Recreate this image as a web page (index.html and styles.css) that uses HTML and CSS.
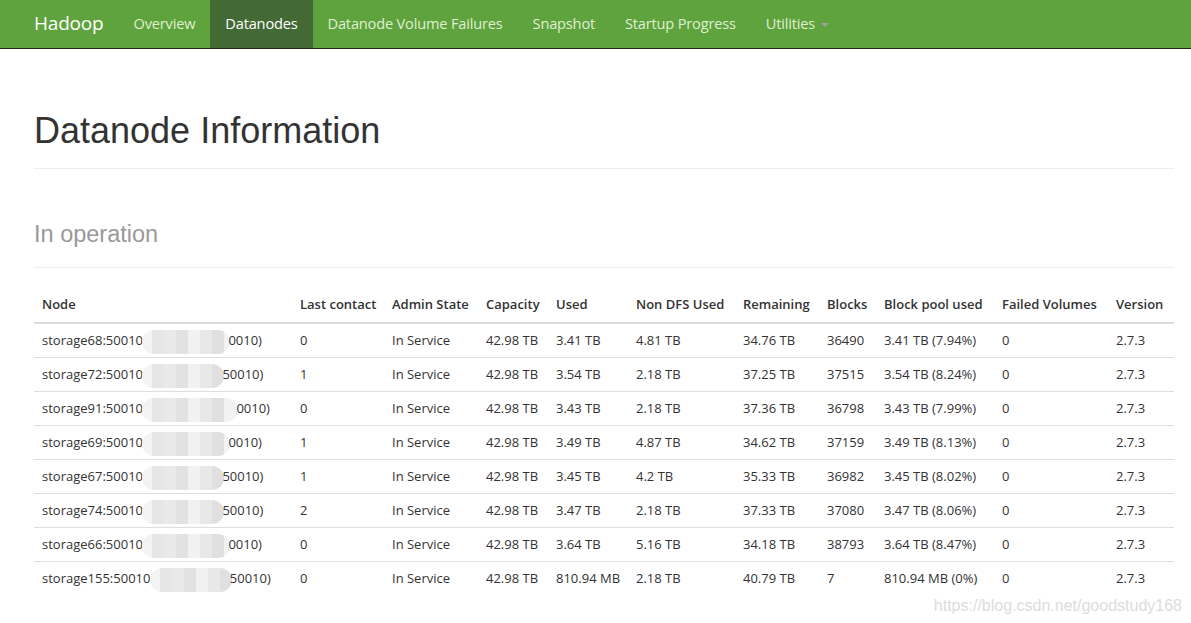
FILE: index.html
```html
<!DOCTYPE html>
<html>
<head>
<meta charset="utf-8">
<title>Datanode Information</title>
<link rel="stylesheet" href="styles.css">
</head>
<body>
<nav class="navbar">
  <div class="nav-inner">
    <span class="brand">Hadoop</span>
    <ul class="nav">
      <li><a>Overview</a></li>
      <li class="active"><a>Datanodes</a></li>
      <li><a>Datanode Volume Failures</a></li>
      <li><a>Snapshot</a></li>
      <li><a>Startup Progress</a></li>
      <li><a>Utilities <span class="caret"></span></a></li>
    </ul>
  </div>
</nav>
<main class="container">
  <div class="page-header"><h1>Datanode Information</h1></div>
  <div class="page-header sub"><h2>In operation</h2></div>
  <table class="table">
    <thead>
      <tr>
        <th class="c-node">Node</th>
        <th class="c-last">Last contact</th>
        <th class="c-admin">Admin State</th>
        <th class="c-cap">Capacity</th>
        <th class="c-used">Used</th>
        <th class="c-nondfs">Non DFS Used</th>
        <th class="c-rem">Remaining</th>
        <th class="c-blocks">Blocks</th>
        <th class="c-bpu">Block pool used</th>
        <th class="c-failed">Failed Volumes</th>
        <th class="c-ver">Version</th>
      </tr>
    </thead>
    <tbody>
      <tr><td>storage68:50010 <span class="blur b1"></span>0010)</td><td>0</td><td>In Service</td><td>42.98 TB</td><td>3.41 TB</td><td>4.81 TB</td><td>34.76 TB</td><td>36490</td><td>3.41 TB (7.94%)</td><td>0</td><td>2.7.3</td></tr>
      <tr><td>storage72:50010 <span class="blur b2"></span>50010)</td><td>1</td><td>In Service</td><td>42.98 TB</td><td>3.54 TB</td><td>2.18 TB</td><td>37.25 TB</td><td>37515</td><td>3.54 TB (8.24%)</td><td>0</td><td>2.7.3</td></tr>
      <tr><td>storage91:50010 <span class="blur b3"></span>0010)</td><td>0</td><td>In Service</td><td>42.98 TB</td><td>3.43 TB</td><td>2.18 TB</td><td>37.36 TB</td><td>36798</td><td>3.43 TB (7.99%)</td><td>0</td><td>2.7.3</td></tr>
      <tr><td>storage69:50010 <span class="blur b1"></span>0010)</td><td>1</td><td>In Service</td><td>42.98 TB</td><td>3.49 TB</td><td>4.87 TB</td><td>34.62 TB</td><td>37159</td><td>3.49 TB (8.13%)</td><td>0</td><td>2.7.3</td></tr>
      <tr><td>storage67:50010 <span class="blur b2"></span>50010)</td><td>1</td><td>In Service</td><td>42.98 TB</td><td>3.45 TB</td><td>4.2 TB</td><td>35.33 TB</td><td>36982</td><td>3.45 TB (8.02%)</td><td>0</td><td>2.7.3</td></tr>
      <tr><td>storage74:50010 <span class="blur b2"></span>50010)</td><td>2</td><td>In Service</td><td>42.98 TB</td><td>3.47 TB</td><td>2.18 TB</td><td>37.33 TB</td><td>37080</td><td>3.47 TB (8.06%)</td><td>0</td><td>2.7.3</td></tr>
      <tr><td>storage66:50010 <span class="blur b1"></span>0010)</td><td>0</td><td>In Service</td><td>42.98 TB</td><td>3.64 TB</td><td>5.16 TB</td><td>34.18 TB</td><td>38793</td><td>3.64 TB (8.47%)</td><td>0</td><td>2.7.3</td></tr>
      <tr><td>storage155:50010 <span class="blur b2"></span>50010)</td><td>0</td><td>In Service</td><td>42.98 TB</td><td>810.94 MB</td><td>2.18 TB</td><td>40.79 TB</td><td>7</td><td>810.94 MB (0%)</td><td>0</td><td>2.7.3</td></tr>
    </tbody>
  </table>
</main>
<div class="watermark">https://blog.csdn.net/goodstudy168</div>
</body>
</html>
```
FILE: styles.css
```css
html, body { margin: 0; padding: 0; background: #fff; }
body {
  font-family: "Open Sans", "Noto Sans", sans-serif;
  font-size: 13px;
  color: #333;
  position: relative;
  min-height: 623px;
  overflow: hidden;
}
.navbar {
  background: #5fa33e;
  border-bottom: 1px solid #1e2b18;
  height: 48px;
}
.nav-inner {
  display: flex;
  align-items: stretch;
  height: 48px;
  padding-left: 34px;
}
.brand {
  font-size: 19px;
  color: #fff;
  line-height: 46px;
  padding-bottom: 2px;
  margin-right: 15px;
  font-family: "Open Sans", sans-serif;
  letter-spacing: -0.2px;
}
.nav {
  display: flex;
  list-style: none;
  margin: 0;
  padding: 0;
}
.nav li a {
  display: block;
  padding: 0 15px 2px;
  line-height: 46px;
  font-size: 14.6px;
  color: #dff0d0;
  letter-spacing: -0.18px;
}
.nav li.active a {
  background: #436a34;
  color: #fff;
}
.caret {
  display: inline-block;
  width: 0;
  height: 0;
  border-top: 4px solid #a0a0a0;
  border-left: 4px solid transparent;
  border-right: 4px solid transparent;
  vertical-align: middle;
  margin-left: 2px;
}
.container {
  padding: 0 17px 0 34px;
}
.page-header {
  border-bottom: 1px solid #eee;
  margin-top: 62px;
  padding-bottom: 17px;
}
.page-header h1 {
  margin: 0;
  font-family: "Liberation Sans", Arial, sans-serif;
  font-weight: 400;
  font-size: 36px;
  line-height: 40px;
  color: #333;
}
.page-header.sub {
  margin-top: 52px;
  padding-bottom: 20px;
}
.page-header h2 {
  margin: 0;
  font-family: "Liberation Sans", Arial, sans-serif;
  font-weight: 400;
  font-size: 23.5px;
  line-height: 26px;
  color: #999;
}
.table {
  width: 1140px;
  border-collapse: collapse;
  margin-top: 18px;
  table-layout: fixed;
}
.table th {
  text-align: left;
  font-weight: 600;
  padding: 8px 8px;
  line-height: 20px;
  border-bottom: 2px solid #ddd;
  white-space: nowrap;
}
.table td {
  padding: 6px 8px;
  line-height: 21px;
  height: 21px;
  border-top: 1px solid #ddd;
  white-space: nowrap;
}
.table tbody tr:first-child td { border-top: none; }
.c-node { width: 242px; }
.c-last { width: 76px; }
.c-admin { width: 78px; }
.c-cap { width: 54px; }
.c-used { width: 64px; }
.c-nondfs { width: 91px; }
.c-rem { width: 68px; }
.c-blocks { width: 41px; }
.c-bpu { width: 102px; }
.c-failed { width: 98px; }
.c-ver { width: 50px; }
.blur {
  display: inline-block;
  height: 24px;
  vertical-align: middle;
  border-radius: 12px;
  margin: -4px -2px -4px -4px;
  background: linear-gradient(90deg, #f3f3f3 0 10px, #e6e6e6 10px 22px, #e9e9e9 22px 34px, #e2e2e2 34px 46px, #f1f1f1 46px 58px, #e8e8e8 58px 70px, #e0e0e0 70px 82px, #f2f2f2 82px 100px);
}
.b1 { width: 88px; }
.b2 { width: 82px; }
.b3 { width: 96px; }
.watermark {
  position: absolute;
  right: 9px;
  bottom: 8px;
  font-family: "Liberation Sans", Arial, sans-serif;
  font-size: 16px;
  color: #dcdcdc;
}
```
